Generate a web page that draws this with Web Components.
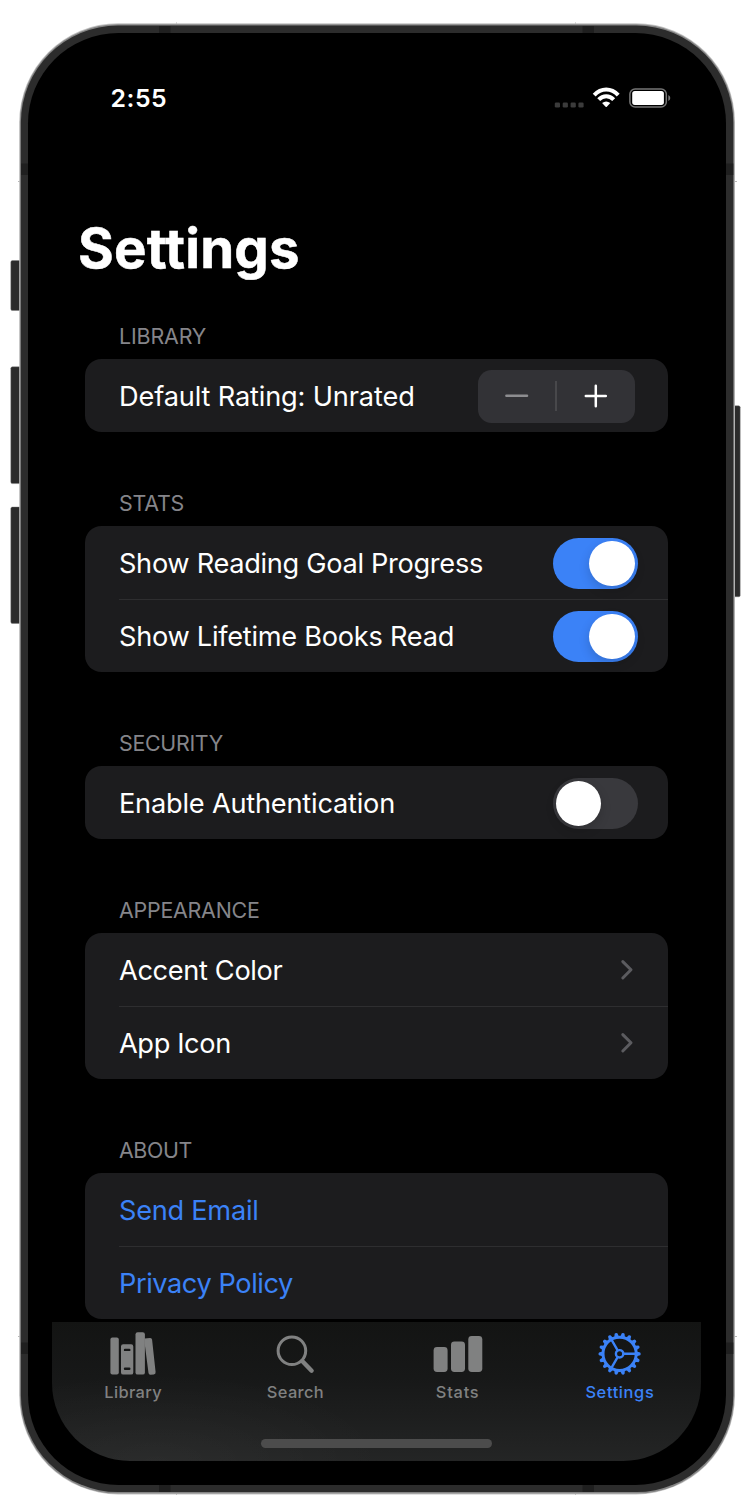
<!DOCTYPE html>
<html lang="en">
<head>
<meta charset="utf-8">
<title>Settings</title>
<style>
  html, body { margin: 0; background: #fff; }
  body { font-family: Inter, "Liberation Sans", sans-serif; color: #fff; width: 752px; height: 1498px; overflow: hidden; }
</style>
</head>
<body>
<phone-frame>
  <status-bar time="2:55"></status-bar>
  <page-title></page-title>
  <settings-list>
    <settings-section label="Library" fit="86.5">
      <settings-row label="Default Rating: Unrated" fit="295"><ui-stepper></ui-stepper></settings-row>
    </settings-section>
    <settings-section label="Stats" fit="64.5">
      <settings-row label="Show Reading Goal Progress" fit="363.5"><ui-toggle on></ui-toggle></settings-row>
      <settings-row label="Show Lifetime Books Read" fit="334.5"><ui-toggle on></ui-toggle></settings-row>
    </settings-section>
    <settings-section label="Security" fit="103.5">
      <settings-row label="Enable Authentication" fit="275.5"><ui-toggle></ui-toggle></settings-row>
    </settings-section>
    <settings-section label="Appearance" fit="140">
      <settings-row label="Accent Color" fit="163"><ui-chevron></ui-chevron></settings-row>
      <settings-row label="App Icon" fit="111.5"><ui-chevron></ui-chevron></settings-row>
    </settings-section>
    <settings-section label="About" fit="72.5">
      <settings-row link label="Send Email" fit="139"></settings-row>
      <settings-row link label="Privacy Policy" fit="173.5"></settings-row>
    </settings-section>
  </settings-list>
  <tab-bar>
    <tab-item label="Library" icon="library" fit="56.5"></tab-item>
    <tab-item label="Search" icon="search" fit="56"></tab-item>
    <tab-item label="Stats" icon="stats" fit="42"></tab-item>
    <tab-item label="Settings" icon="gear" fit="67.5" active></tab-item>
  </tab-bar>
</phone-frame>

<script>
class Base extends HTMLElement {
  connectedCallback() {
    if (this.shadowRoot) return;
    this.attachShadow({ mode: 'open' }).innerHTML = this.render();
    // Tracks the text so that it fills its given width.
    this.shadowRoot.querySelectorAll('[data-fit]').forEach(el => {
      const n = el.textContent.length;
      const natural = el.getBoundingClientRect().width;
      const target = parseFloat(el.dataset.fit);
      if (target) el.style.letterSpacing = ((target + 0.8 - natural) / (n - 1)).toFixed(3) + 'px';
    });
  }
  a(name) { return this.getAttribute(name) || ''; }
}

customElements.define('phone-frame', class extends Base {
  render() {
    const btn = (x, y, w, h) => `<rect x="${x}" y="${y}" width="${w}" height="${h}" rx="1.5" fill="#2b2b2b" stroke="#777" stroke-opacity=".5" stroke-width=".8"/>`;
    const body = (x, y, w, h, r, fill) => `<rect x="${x}" y="${y}" width="${w}" height="${h}" rx="${r}" fill="${fill}"/>`;
    return `<style>
      :host { display: grid; width: 752px; height: 1498px; }
      svg, main { grid-area: 1 / 1; }
      main { display: flex; flex-direction: column; width: 649px; height: 1461px; margin-left: 52px; box-sizing: border-box; min-height: 0; }
    </style>
    <svg width="752" height="1498">
      ${btn(10.8, 260.5, 11, 50)}${btn(10.8, 366.8, 11, 116.8)}${btn(10.8, 507, 11, 116.4)}${btn(729, 405.8, 11.2, 191)}
      <path d="M176.5 22.5v2M575.5 22.5v2M176.5 1493v2M575.5 1493v2M18 181.5h2M735 181.5h2M18 1336.5h2M735 1336.5h2" stroke="#999" stroke-width=".7"/>
      ${body(19.2, 23.2, 715.8, 1471.2, 99, '#c4c4c4')}
      ${body(19.9, 24.2, 714.4, 1469.4, 98, '#858585')}
      ${body(20.9, 25.6, 712.4, 1466.4, 97, '#2c2c2c')}
      <path d="M159 26h11.5v7h-11.5zM582.5 26h11.5v7h-11.5zM159 1485h11.5v7h-11.5zM582.5 1485h11.5v7h-11.5zM21 163.5h7v11.5h-7zM726 163.5h7.3v11.5h-7.3zM21 1342.5h7v11.5h-7zM726 1342.5h7.3v11.5h-7.3z" fill="#1f1f1f"/>
      ${body(28, 33, 698, 1452, 90.5, '#000')}
    </svg>
    <main><slot></slot></main>`;
  }
});

customElements.define('status-bar', class extends Base {
  render() {
    return `<style>
      :host { display: flex; justify-content: space-between; align-items: center; height: 30px; flex: none;
              margin-top: 83px; padding: 0 29px 0 58.4px; }
      .time { font: 600 24.8px/30px Inter, sans-serif; white-space: nowrap; }
    </style>
    <span class="time" data-fit="55.5">${this.a('time')}</span>
    <svg width="118" height="30" viewBox="554 83 118 30">
      <g fill="#3b3b3b"><rect x="554.8" y="102.4" width="5.2" height="5.2" rx="1.3"/><rect x="562.7" y="102.4" width="5.2" height="5.2" rx="1.3"/><rect x="570.6" y="102.4" width="5.2" height="5.2" rx="1.3"/><rect x="578.4" y="102.4" width="5.2" height="5.2" rx="1.3"/></g>
      <g fill="none" stroke="#fff" stroke-width="4">
        <path d="M594.2 95.1Q599.4 89.5 606.2 89.5T618.2 95.1"/>
        <path d="M598.7 99.7Q602 96.2 606.2 96.2T613.7 99.7"/>
      </g>
      <path d="M602.1 103Q606.2 99.8 610.3 103L606.8 106.8Q606.2 107.4 605.6 106.8Z" fill="#fff"/>
      <rect x="629.9" y="88.9" width="36.4" height="18.2" rx="5.2" fill="none" stroke="#757575" stroke-width="1.5"/>
      <rect x="632.2" y="91.1" width="31.7" height="13.8" rx="2.6" fill="#fff"/>
      <path d="M668.3 95v6q2-.9 2-3t-2-3z" fill="#757575"/>
    </svg>`;
  }
});

customElements.define('page-title', class extends Base {
  render() {
    return `<style>
      :host { display: block; flex: none; margin-top: 101px; padding-left: 26px; height: 69px; }
      h1 { margin: 0; display: inline-block; font: 700 54.6px/68px Inter, sans-serif; white-space: nowrap; -webkit-text-stroke: .5px #fff; }
    </style><h1 data-fit="220.8">Settings</h1>`;
  }
});

customElements.define('settings-list', class extends Base {
  render() {
    return `<style>
      :host { display: flex; flex-direction: column; gap: 34px; flex: none; margin-top: 16.4px; padding: 0 33.5px 0 33.3px; height: 1022.6px; }
    </style><slot></slot>`;
  }
});

customElements.define('settings-section', class extends Base {
  render() {
    return `<style>
      :host { display: block; }
      header { height: 60px; padding: 24px 0 0 33.7px; box-sizing: border-box; font: 400 21.4px/26px Inter, sans-serif; color: #85858a; text-transform: uppercase; }
      header span { display: inline-block; white-space: nowrap; }
      .card { background: #1c1c1e; border-radius: 16.5px; overflow: hidden; }
    </style>
    <header><span data-fit="${this.a('fit')}">${this.a('label')}</span></header>
    <div class="card"><slot></slot></div>`;
  }
});

customElements.define('settings-row', class extends Base {
  render() {
    return `<style>
      :host { display: flex; align-items: center; height: 73px; box-sizing: border-box; margin-left: 33.7px; padding-right: 30px; justify-content: space-between; font: 400 27.2px/34px Inter, sans-serif; border-top: 1.4px solid transparent; }
      :host(:not(:first-child)) { border-top-color: #2e2e30; }
      :host([link]) { color: #3b82f7; }
      .label { display: inline-block; white-space: nowrap; padding-top: 1px; }
    </style>
    <span class="label" data-fit="${this.a('fit')}">${this.a('label')}</span><slot></slot>`;
  }
});

customElements.define('ui-stepper', class extends Base {
  render() {
    return `<style>
      :host { display: grid; grid-template-columns: 1fr 2px 1fr; align-items: center; justify-items: center; width: 156.5px; height: 53px; border-radius: 13.5px; background: #323236; margin-right: 3px; }
      i { width: 2px; height: 30px; background: #48484b; }
      svg { display: block; fill: none; stroke-width: 2.5; stroke-linecap: round; }
    </style>
    <svg width="26" height="26"><path d="M2.4 12.8h20.6" stroke="#8d8d90"/></svg><i></i>
    <svg width="26" height="26"><path d="M2.8 13h20M12.8 2.8v20.4" stroke="#fff"/></svg>`;
  }
});

customElements.define('ui-toggle', class extends Base {
  render() {
    return `<style>
      :host { display: flex; align-items: center; width: 85px; height: 51.6px; border-radius: 26px; box-sizing: border-box; padding: 0 3px; background: #39393d; }
      :host([on]) { background: #3b82f7; justify-content: flex-end; }
      i { width: 45.4px; height: 45.4px; border-radius: 50%; background: #fff; box-shadow: 0 4px 11px rgba(0,0,0,.16); }
    </style><i></i>`;
  }
});

customElements.define('ui-chevron', class extends Base {
  render() {
    return `<style>:host { display: block; margin-right: 2.8px; } svg { display: block; }</style>
    <svg width="16" height="24" fill="none" stroke="#5b5b5f" stroke-width="3" stroke-linecap="round" stroke-linejoin="round"><path d="M3.8 3.6l8.2 8.2-8.2 8.2"/></svg>`;
  }
});

customElements.define('tab-bar', class extends Base {
  render() {
    return `<style>
      :host { display: grid; grid-template-rows: 90px 1fr; flex: none; height: 139px; overflow: hidden;
        background: radial-gradient(230px 90px at 105px 139px, rgba(255,255,255,.03), transparent), linear-gradient(#131413, #171818 40%, #242525);
        border-radius: 0 0 78px 78px; }
      nav { display: grid; grid-template-columns: repeat(4, 1fr); }
      i { width: 231px; height: 8.6px; border-radius: 5px; background: #4c4c4c; margin: 27.2px 0 0 209.2px; }
    </style><nav><slot></slot></nav><i></i>`;
  }
});

const teeth = Array.from({ length: 18 }, (_, i) =>
  `<path d="M17 -2.4L20.6 -1.4Q21.8 0 20.6 1.4L17 2.4z" transform="rotate(${i * 20})"/>`).join('');
const icons = {
  library: `<g fill="currentColor"><rect x="5.4" y="9.6" width="8.4" height="37" rx="2"/>
    <path fill-rule="evenodd" d="M18.2 16.2h7.9q2.2 0 2.2 2.2v26q0 2.2-2.2 2.2h-7.9q-2.2 0-2.2-2.2v-26q0-2.2 2.2-2.2zM20 20.7a1.2 1.2 0 0 0 0 2.4h4.3a1.2 1.2 0 0 0 0-2.4zM20 39.5a1.2 1.2 0 0 0 0 2.4h4.3a1.2 1.2 0 0 0 0-2.4z"/>
    <rect x="30.5" y="4.3" width="9.4" height="42.3" rx="2.2"/>
    <path d="M39.6 10.6L45 10.1Q46.9 10 47.1 11.8L50.6 44Q50.8 46.2 48.8 46.4L45.6 46.7Q43.7 46.8 43.5 45L39.6 15z"/></g>`,
  search: `<g fill="none" stroke="currentColor"><circle cx="24.9" cy="22.7" r="13.8" stroke-width="3"/><path d="M35.2 33l9.4 9.7" stroke-width="4.4" stroke-linecap="round"/></g>`,
  stats: `<g fill="currentColor"><rect x="3.6" y="19" width="14" height="25" rx="3.4"/><rect x="21" y="13.6" width="14" height="30.4" rx="3.4"/><rect x="38.3" y="8" width="14" height="36" rx="3.4"/></g>`,
  gear: `<g transform="translate(27.6 25.8)"><g fill="currentColor">${teeth}</g><g fill="none" stroke="currentColor" stroke-width="2.4"><circle r="16.6" stroke-width="3"/><circle r="3.7"/><path d="M4.2 0H16M-2.1 -3.64L-8 -13.86M-2.1 3.64L-8 13.86"/></g></g>`
};
customElements.define('tab-item', class extends Base {
  render() {
    return `<style>
      :host { display: flex; flex-direction: column; align-items: center; padding-top: 6px; color: #808181; font: 500 16.4px/20px Inter, sans-serif; }
      :host([active]) { color: #3b82f7; }
      svg { display: block; }
      span { white-space: nowrap; margin-top: 6px; }
    </style>
    <svg width="56" height="48">${icons[this.a('icon')]}</svg>
    <span data-fit="${this.a('fit')}">${this.a('label')}</span>`;
  }
});
</script>
</body>
</html>
